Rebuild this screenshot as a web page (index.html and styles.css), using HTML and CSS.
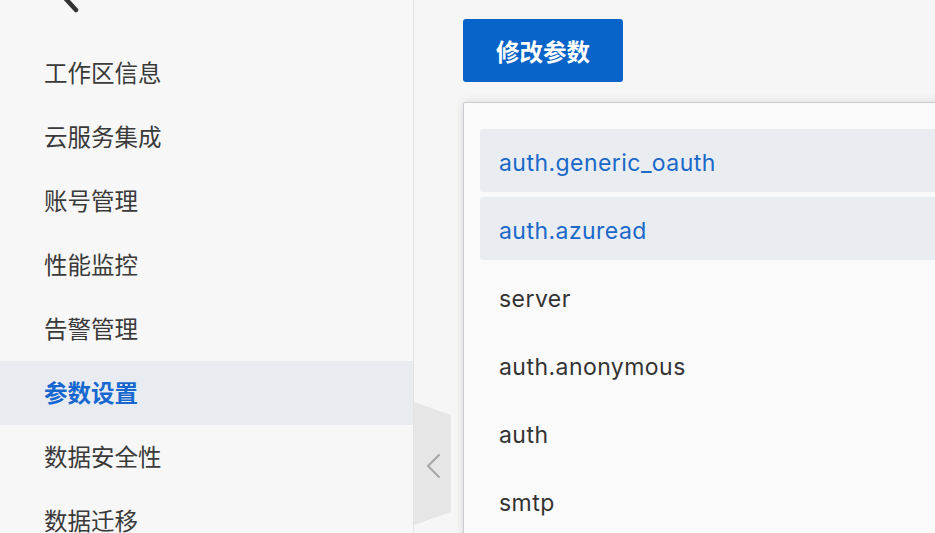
FILE: index.html
```html
<!DOCTYPE html>
<html>
<head>
    <title>参数设置</title>
    <link rel="stylesheet" href="styles.css">
</head>
<body>
    <div class="layout">
        <aside class="sidebar">
            <div class="sidebar-top">
                <svg class="back-icon" width="40" height="60" viewBox="0 0 40 60">
                    <polyline points="32,6 10,30 32,54" fill="none" stroke="#333" stroke-width="4.5" stroke-linecap="round" stroke-linejoin="round"/>
                </svg>
            </div>
            <ul class="menu">
                <li class="menu-item">工作区信息</li>
                <li class="menu-item">云服务集成</li>
                <li class="menu-item">账号管理</li>
                <li class="menu-item">性能监控</li>
                <li class="menu-item">告警管理</li>
                <li class="menu-item active">参数设置</li>
                <li class="menu-item">数据安全性</li>
                <li class="menu-item">数据迁移</li>
            </ul>
        </aside>

        <div class="collapse-handle">
            <svg width="37" height="124" viewBox="0 0 37 124">
                <polygon points="0,0 37,13 37,110 0,123" fill="#e6e6e6"/>
                <polyline points="25,53 14,64 25,75" fill="none" stroke="#a6a6a6" stroke-width="2" stroke-linecap="round" stroke-linejoin="round"/>
            </svg>
        </div>

        <main class="content">
            <button class="btn-primary">修改参数</button>

            <div class="panel">
                <div class="param-row selected">auth.generic_oauth</div>
                <div class="param-row selected">auth.azuread</div>
                <div class="param-row">server</div>
                <div class="param-row">auth.anonymous</div>
                <div class="param-row">auth</div>
                <div class="param-row">smtp</div>
            </div>
        </main>
    </div>
</body>
</html>
```

FILE: styles.css
```css
body {
    margin: 0;
    padding: 0;
    background-color: #f6f6f6;
    font-family: Inter, "Noto Sans CJK SC", sans-serif;
    color: #333;
    overflow: hidden;
}

.layout {
    position: relative;
    display: flex;
    height: 533px;
}

/* left menu */
.sidebar {
    width: 413px;
    flex-shrink: 0;
    background-color: #f7f7f7;
    border-right: 1px solid #e2e2e2;
}

.sidebar-top {
    height: 41px;
    overflow: hidden;
}

.back-icon {
    display: block;
    margin: -44px 0 0 44px;
}

.menu {
    list-style: none;
    margin: 0;
    padding: 0;
}

.menu-item {
    height: 64px;
    line-height: 62px;
    padding-left: 44px;
    font-family: "Noto Sans CJK SC", sans-serif;
    font-size: 23.5px;
    color: #3a3a3a;
}

.menu-item.active {
    background-color: #e8ecf1;
    color: #1668d0;
    font-weight: bold;
}

.collapse-handle {
    position: absolute;
    left: 414px;
    top: 402px;
    height: 124px;
}

.collapse-handle svg {
    display: block;
}

/* right side */
.content {
    flex: 1;
    padding: 19px 0 0 49px;
    overflow: hidden;
}

.btn-primary {
    display: block;
    width: 160px;
    height: 63px;
    background-color: #0864c8;
    color: #fff;
    border: none;
    border-radius: 3px;
    font-family: "Noto Sans CJK SC", sans-serif;
    font-size: 23.5px;
    font-weight: bold;
}

.panel {
    margin-top: 20px;
    width: 520px;
    height: 460px;
    background-color: #fafafa;
    border: 1px solid #c9cdd2;
    border-radius: 2px;
    box-shadow: 0 0 10px rgba(0, 0, 0, 0.12);
    padding: 26px 0 0 16px;
    display: flex;
    flex-direction: column;
    gap: 5px;
}

.param-row {
    height: 63px;
    line-height: 68px;
    padding-left: 19px;
    border-radius: 3px;
    font-size: 23px;
    letter-spacing: 0.45px;
    color: #333;
    flex-shrink: 0;
}

.param-row.selected {
    background-color: #e9edf2;
    color: #1a68c8;
}
```
